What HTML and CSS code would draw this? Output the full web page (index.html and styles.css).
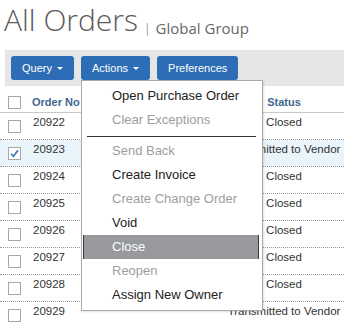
FILE: index.html
```html
<!DOCTYPE html>
<html>
<head>
<meta charset="utf-8">
<link rel="stylesheet" href="styles.css">
</head>
<body>
<div class="page">
  <div class="title">
    <h1 class="title-main">All Orders</h1>
    <span class="title-sep">|</span>
    <span class="title-sub">Global Group</span>
  </div>
  <div class="toolbar">
    <button class="btn">Query<span class="caret"></span></button>
    <button class="btn">Actions<span class="caret"></span></button>
    <button class="btn">Preferences</button>
  </div>
  <div class="table">
    <div class="row head">
      <div class="c-check"><span class="cb"></span></div>
      <div class="c-order">Order No</div>
      <div class="c-status">Status</div>
    </div>
    <div class="row"><div class="c-check"><span class="cb"></span></div><div class="c-order">20922</div><div class="c-status">Closed</div></div>
    <div class="row sel"><div class="c-check"><span class="cb checked"><svg viewBox="0 0 12 12" width="11" height="11"><path d="M2.2 6.4 L4.8 9 L9.8 2.6" fill="none" stroke="#3b7bbf" stroke-width="1.9"/></svg></span></div><div class="c-order">20923</div><div class="c-status">Transmitted to Vendor</div></div>
    <div class="row"><div class="c-check"><span class="cb"></span></div><div class="c-order">20924</div><div class="c-status">Closed</div></div>
    <div class="row"><div class="c-check"><span class="cb"></span></div><div class="c-order">20925</div><div class="c-status">Closed</div></div>
    <div class="row"><div class="c-check"><span class="cb"></span></div><div class="c-order">20926</div><div class="c-status">Closed</div></div>
    <div class="row"><div class="c-check"><span class="cb"></span></div><div class="c-order">20927</div><div class="c-status">Closed</div></div>
    <div class="row"><div class="c-check"><span class="cb"></span></div><div class="c-order">20928</div><div class="c-status">Closed</div></div>
    <div class="row"><div class="c-check"><span class="cb"></span></div><div class="c-order">20929</div><div class="c-status">Transmitted to Vendor</div></div>
  </div>
  <div class="menu">
    <div class="item">Open Purchase Order</div>
    <div class="item dis">Clear Exceptions</div>
    <div class="sep"></div>
    <div class="item dis">Send Back</div>
    <div class="item">Create Invoice</div>
    <div class="item dis">Create Change Order</div>
    <div class="item">Void</div>
    <div class="item hl">Close</div>
    <div class="item dis">Reopen</div>
    <div class="item">Assign New Owner</div>
  </div>
</div>
</body>
</html>
```

FILE: styles.css
```css
html, body {
  margin: 0;
  padding: 0;
  background: #fff;
}
.page {
  position: relative;
  width: 344px;
  height: 324px;
  overflow: hidden;
  font-family: "Liberation Sans", Arial, sans-serif;
}
.title {
  height: 50px;
  padding-left: 4px;
  padding-top: 0;
  display: flex;
  align-items: baseline;
  box-sizing: border-box;
}
.title-main {
  margin: 0;
  font-family: "Open Sans", sans-serif;
  font-weight: 300;
  font-size: 30px;
  line-height: 40px;
  color: #5a5a5a;
}
.title-sep {
  font-family: "Open Sans", sans-serif;
  font-size: 12px;
  color: #999;
  margin-left: 6px;
  position: relative;
  top: 2px;
}
.title-sub {
  font-family: "Open Sans", sans-serif;
  font-size: 15px;
  color: #666;
  margin-left: 5px;
  position: relative;
  top: 3px;
}
.toolbar {
  margin-left: 5px;
  height: 36px;
  box-sizing: border-box;
  padding: 6px 6px;
  background: #e6e6e6;
  display: flex;
  gap: 7px;
}
.btn {
  height: 24px;
  padding: 0 11px;
  border: none;
  border-radius: 3px;
  background: #2d6db5;
  color: #fff;
  font-family: "Liberation Sans", Arial, sans-serif;
  font-size: 11px;
  display: flex;
  align-items: center;
}
.caret {
  display: inline-block;
  width: 0;
  height: 0;
  border-left: 3px solid transparent;
  border-right: 3px solid transparent;
  border-top: 3px solid #fff;
  margin-left: 5px;
}
.table {
  font-size: 11.5px;
  color: #333;
}
.row {
  display: grid;
  grid-template-columns: 32px 192px 120px;
  height: 27px;
  box-sizing: border-box;
  border-bottom: 1px dotted #999;
  line-height: 18px;
}
.row.head {
  height: 27px;
  padding-top: 6px;
  border-bottom: 1px solid #c8c8c8;
  color: #41678f;
  font-weight: bold;
  font-size: 11px;
  line-height: 20px;
}
.row.sel {
  background: #e9f4fb;
}
.c-check {
  display: flex;
  align-items: center;
  padding-left: 8px;
}
.c-order {
  padding-left: 1px;
}
.row.head .c-order {
  padding-left: 0;
}
.c-status {
  text-align: center;
  white-space: nowrap;
}
.cb {
  width: 13px;
  height: 13px;
  box-sizing: border-box;
  border: 1px solid #a6a6a6;
  background: #fff;
  display: flex;
  align-items: center;
  justify-content: center;
}
.menu {
  position: absolute;
  left: 81px;
  top: 80px;
  width: 182px;
  box-sizing: border-box;
  border: 1px solid #a9a9a9;
  background: #fff;
  padding: 3px 0;
  box-shadow: 1px 1px 2px rgba(0, 0, 0, 0.12);
  font-size: 13px;
  color: #222;
}
.item {
  height: 24px;
  line-height: 24px;
  padding-left: 30px;
}
.item.dis {
  color: #9e9e9e;
}
.item.hl {
  margin: 0 3px 0 1px;
  padding-left: 28px;
  background: #97999c;
  color: #fff;
  border-left: 1px solid #3a3a3a;
  border-right: 1px solid #3a3a3a;
}
.sep {
  height: 1px;
  margin: 4px 6px 2px 5px;
  background: #333;
}
```
